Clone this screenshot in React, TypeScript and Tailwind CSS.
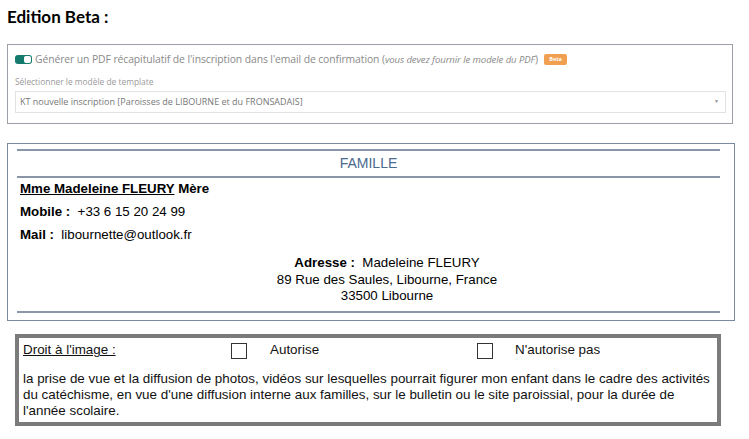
import React from 'react';

const Checkbox: React.FC = () => (
  <span className="inline-block w-[16px] h-[16px] border border-[#333] bg-white" />
);

function App() {
  return (
    <div className="w-[749px] h-[439px] bg-white overflow-hidden relative">
      <h1 className="pl-[7px] pt-[5px] text-[17px] font-bold text-black leading-[24px] font-['Lato',sans-serif]">
        Edition Beta :
      </h1>

      {/* PDF settings panel */}
      <div className="ml-[7px] mt-[15px] w-[726px] h-[80px] border border-[#9aa0a6] px-[7px] pt-[8px] font-['Open_Sans',sans-serif]">
        <div className="flex items-center gap-[3px] h-[13px]">
          <span className="relative inline-block w-[17px] h-[9px] rounded-[3px] bg-[#157a6e]">
            <span className="absolute right-[1px] top-[1px] w-[7px] h-[7px] rounded-[2px] bg-white" />
          </span>
          <span className="text-[10.4px] text-[#8a8a8a] whitespace-nowrap tracking-[-0.1px]">
            Générer un PDF récapitulatif de l'inscription dans l'email de confirmation (<i className="text-[9.6px]">vous devez fournir le modele du PDF</i>)
          </span>
          <span className="ml-[3px] inline-flex items-center justify-center h-[11px] w-[23px] rounded-[2px] bg-[#f0a050] text-white text-[5.5px] font-bold">
            Beta
          </span>
        </div>
        <div className="mt-[10px] text-[8.4px] text-[#9a9a9a] leading-[12px]">Sélectionner le modèle de template</div>
        <div className="mt-[3px] w-[711px] h-[22px] border border-[#e2e2e2] flex items-center justify-between pl-[4px] pr-[6px]">
          <span className="text-[9px] text-[#777] whitespace-nowrap">KT nouvelle inscription [Paroisses de LIBOURNE et du FRONSADAIS]</span>
          <span className="text-[5px] text-[#888]">▼</span>
        </div>
      </div>

      {/* Family panel */}
      <div className="ml-[7px] mt-[19px] w-[728px] h-[178px] border border-[#7a8aa0] px-[9px] pt-[5px] font-['Liberation_Sans',Arial,sans-serif] text-[13px] text-black">
        <div className="w-[703px] border-t-2 border-b-2 border-[#8896a8] h-[29px] flex items-center justify-center text-[#4a6a8e] text-[14px]">
          FAMILLE
        </div>
        <div className="pl-[3px] mt-[-1px] leading-[23px] text-[13.3px]">
          <div className="font-bold"><span className="underline">Mme Madeleine FLEURY</span> Mère</div>
          <div><span className="font-bold">Mobile :</span>&nbsp; +33 6 15 20 24 99</div>
          <div><span className="font-bold">Mail :</span>&nbsp; libournette@outlook.fr</div>
        </div>
        <div className="mt-[9px] text-center leading-[16.5px] pl-[32px] text-[13.3px]">
          <div><span className="font-bold">Adresse :</span>&nbsp; Madeleine FLEURY</div>
          <div>89 Rue des Saules, Libourne, France</div>
          <div>33500 Libourne</div>
        </div>
        <div className="w-[703px] border-t-2 border-[#8896a8] mt-[6px]" />
      </div>

      {/* Image rights panel */}
      <div className="ml-[15px] mt-[13px] w-[706px] h-[92px] border-4 border-[#7b7b7b] pl-[4px] pt-[4px] font-['Liberation_Sans',Arial,sans-serif] text-[13.4px] text-[#111]">
        <div className="flex items-center h-[17px]">
          <span className="underline w-[208px]">Droit à l'image :</span>
          <Checkbox />
          <span className="ml-[23px] w-[207px]">Autorise</span>
          <Checkbox />
          <span className="ml-[22px]">N'autorise pas</span>
        </div>
        <p className="mt-[12px] leading-[16px] pr-[4px]">
          la prise de vue et la diffusion de photos, vidéos sur lesquelles pourrait figurer mon enfant dans le cadre des activités du catéchisme, en vue d'une diffusion interne aux familles, sur le bulletin ou le site paroissial, pour la durée de l'année scolaire.
        </p>
      </div>
    </div>
  );
}

export default App;
